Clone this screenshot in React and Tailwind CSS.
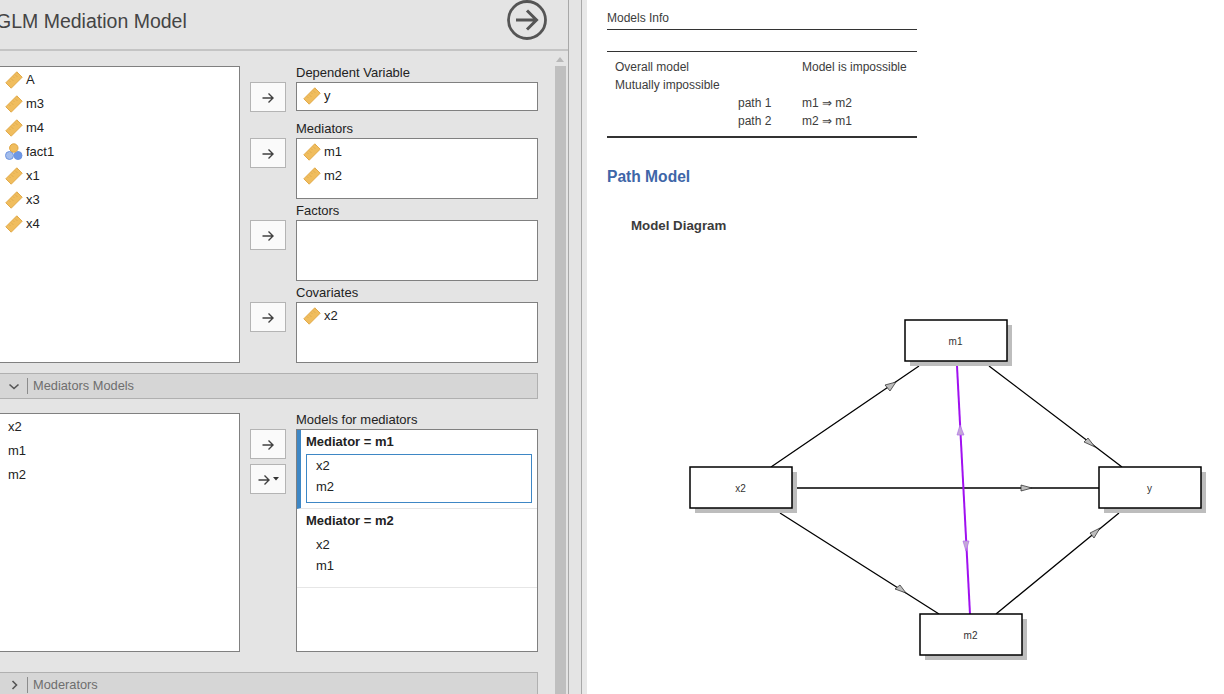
const Ruler = () => (
    <svg width="18" height="18" viewBox="0 0 18 18" className="shrink-0">
        <path d="M0.8 11.8 11.8 0.8 17.2 6.2 6.2 17.2Z" fill="#f0bd5e" stroke="#e2aa4a" strokeWidth="1" />
        <path d="M4 9.5l1.5 1.5M6 7.5l2.5 2.5M8 5.5l1.5 1.5M10 3.5l2.5 2.5M12 1.5l1.5 1.5" stroke="#dba94f" strokeWidth="0.8" fill="none" />
    </svg>
);

const Nominal = () => (
    <svg width="18" height="18" viewBox="0 0 18 18" className="shrink-0">
        <circle cx="4.5" cy="12.5" r="4" fill="#a3bdec" stroke="#6f94df" strokeWidth="1" />
        <circle cx="13" cy="12.5" r="4" fill="#6d97e6" stroke="#6f94df" strokeWidth="1" />
        <circle cx="8.8" cy="5" r="4.2" fill="#f0bd5e" stroke="#dfa542" strokeWidth="1" />
    </svg>
);

const ArrowGlyph = () => (
    <svg width="14" height="12" viewBox="0 0 14 12" className="mt-[2px]">
        <path d="M1.5 6h10.5M7.5 1.5 12 6 7.5 10.5" fill="none" stroke="#404040" strokeWidth="1.4" />
    </svg>
);

const AssignButton = ({ menu = false, className = "" }) => (
    <div className={`w-9 h-[30px] shrink-0 flex items-center justify-center bg-[#fafafa] border border-[#b4b4b4] ${className}`}>
        <ArrowGlyph />
        {menu && (
            <svg width="6" height="4" viewBox="0 0 6 4" className="ml-[2px]">
                <path d="M0 0h6L3 3.5Z" fill="#333" />
            </svg>
        )}
    </div>
);

const VarRow = ({ name, icon = <Ruler />, className = "" }) => (
    <div className={`h-6 flex items-center gap-[3px] ${className}`}>
        {icon}
        <span>{name}</span>
    </div>
);

const Target = ({ label, height, children, className = "" }) => (
    <div className={`flex ${className}`}>
        <AssignButton className="mt-4 ml-[10px]" />
        <div className="ml-[10px] w-[242px]">
            <div className="h-4 leading-[13px] text-[13px] text-[#222]">{label}</div>
            <div className={`bg-white border border-[#808080] pl-[6px] pt-[1px] ${height}`}>{children}</div>
        </div>
    </div>
);

const Section = ({ open, title, className = "" }) => (
    <div className={`w-[538px] h-[26px] shrink-0 flex items-center bg-[#d6d6d6] border border-l-0 border-[#b0b0b0] ${className}`}>
        <svg width="12" height="12" viewBox="0 0 12 12" className="ml-2">
            <path d={open ? "M1.5 4.5 6 8.5l4.5-4" : "M4.5 2 8.5 6l-4 4"} fill="none" stroke="#555" strokeWidth="1.6" />
        </svg>
        <div className="w-px h-4 bg-[#8c8c8c] ml-[7px]" />
        <span className="ml-[5px] text-[12.8px] text-[#6e6e6e]">{title}</span>
    </div>
);

const Box = ({ x, y, label }) => (
    <g>
        <rect x={x + 5} y={y + 5} width="102" height="41" fill="#bdbdbd" />
        <rect x={x} y={y} width="102" height="41" fill="#fff" stroke="#000" strokeWidth="1.5" />
        <text x={x + 50.5} y={y + 25} textAnchor="middle" fontSize="10" fontFamily="Liberation Sans" fill="#333">{label}</text>
    </g>
);

const Head = ({ points, purple = false }) => (
    <polygon
        points={points}
        fill={purple ? "#c4a8d8" : "#bdbdbd"}
        stroke={purple ? "#b070e8" : "#222"}
        strokeWidth="0.7"
    />
);

const Diagram = () => (
    <svg width="560" height="370" viewBox="680 310 560 370" className="block mt-[76px] ml-[73px]">
        <path d="M771 467 919 366M989 366 1122 467M797 488H1099M780 513 939 614M996 614 1119 513" stroke="#000" strokeWidth="1.3" fill="none" />
        <path d="M957 366 970 614" stroke="#a010f0" strokeWidth="2" fill="none" />
        <Head points="896,382 885,385 890,391" />
        <Head points="1095,447 1084,442 1088,438" />
        <Head points="1032,488 1021,485 1021,491" />
        <Head points="906,593 895,589 900,585" />
        <Head points="1100,528 1090,533 1094,538" />
        <Head purple points="960,425 957,435 964,435" />
        <Head purple points="966,551 963,541 969,541" />
        <Box x={905} y={320} label="m1" />
        <Box x={690} y={467} label="x2" />
        <Box x={1099} y={467} label="y" />
        <Box x={920} y={614} label="m2" />
    </svg>
);

const infoRows = [
    ["Overall model", "", "Model is impossible"],
    ["Mutually impossible", "", ""],
    ["", "path 1", "m1 ⇒ m2"],
    ["", "path 2", "m2 ⇒ m1"],
];

export default function App() {
    return (
        <div className="w-[1224px] h-[694px] flex overflow-hidden bg-white font-['Liberation_Sans',sans-serif]">
            <div className="w-[569px] h-full shrink-0 flex flex-col bg-[#e4e4e4] border-r border-[#a8a8a8]">
                <div className="h-[51px] shrink-0 flex items-start justify-between border-b-2 border-[#c4c4c4]">
                    <h1 className="mt-[7px] ml-[-4px] text-[19.5px] leading-7 whitespace-nowrap text-[#444]">GLM Mediation Model</h1>
                    <svg width="42" height="42" viewBox="0 0 42 42" className="mr-[20px] mt-[-1px]">
                        <circle cx="21" cy="21" r="18.5" fill="none" stroke="#555" strokeWidth="2.8" />
                        <path d="M10 21h20M21 11.5 30.5 21 21 30.5" fill="none" stroke="#555" strokeWidth="3" />
                    </svg>
                </div>
                <div className="flex flex-1 min-h-0">
                    <div className="w-[552px] shrink-0 overflow-hidden pt-[15px] text-[13px] text-[#222]">
                        <div className="flex">
                            <div className="w-[240px] h-[297px] shrink-0 bg-white border border-l-0 border-[#808080] pl-[5px] pt-[1px]">
                                <VarRow name="A" />
                                <VarRow name="m3" />
                                <VarRow name="m4" />
                                <VarRow name="fact1" icon={<Nominal />} />
                                <VarRow name="x1" />
                                <VarRow name="x3" />
                                <VarRow name="x4" />
                            </div>
                            <div className="flex flex-col">
                                <Target label="Dependent Variable" height="h-[29px]">
                                    <VarRow name="y" />
                                </Target>
                                <Target label="Mediators" height="h-[61px]" className="mt-[10px]">
                                    <VarRow name="m1" />
                                    <VarRow name="m2" />
                                </Target>
                                <Target label="Factors" height="h-[61px]" className="mt-[5px]" />
                                <Target label="Covariates" height="h-[61px]" className="mt-[5px]">
                                    <VarRow name="x2" />
                                </Target>
                            </div>
                        </div>
                        <Section open title="Mediators Models" className="mt-[10px]" />
                        <div className="flex mt-[14px]">
                            <div className="w-[240px] h-[239px] shrink-0 bg-white border border-l-0 border-[#808080] pl-2 pt-[1px]">
                                <div className="h-6 flex items-center">x2</div>
                                <div className="h-6 flex items-center">m1</div>
                                <div className="h-6 flex items-center">m2</div>
                            </div>
                            <div className="flex flex-col gap-[5px] mt-4 ml-[10px]">
                                <AssignButton />
                                <AssignButton menu />
                            </div>
                            <div className="ml-[10px] w-[242px] -mt-[1px]">
                                <div className="h-[17px] leading-[15px] text-[#222]">Models for mediators</div>
                                <div className="h-[223px] bg-white border border-[#808080]">
                                    <div className="h-[79px] border-l-4 border-b border-l-[#3e87c5] border-b-[#e6e6e6] pl-[5px] pr-[5px]">
                                        <div className="h-6 flex items-center font-bold">Mediator = m1</div>
                                        <div className="h-[49px] border border-[#3e87c5] pl-[9px]">
                                            <div className="h-[21px] flex items-center">x2</div>
                                            <div className="h-[21px] flex items-center">m2</div>
                                        </div>
                                    </div>
                                    <div className="h-[79px] border-b border-[#e6e6e6] pl-[9px] pr-[5px]">
                                        <div className="h-6 flex items-center font-bold">Mediator = m2</div>
                                        <div className="h-[49px] pl-[10px] pt-[1px]">
                                            <div className="h-[21px] flex items-center">x2</div>
                                            <div className="h-[21px] flex items-center">m1</div>
                                        </div>
                                    </div>
                                </div>
                            </div>
                        </div>
                        <Section title="Moderators" className="mt-[20px]" />
                    </div>
                    <div className="w-[13px] shrink-0 flex flex-col ml-[3px]">
                        <svg width="8" height="5" viewBox="0 0 8 5" className="ml-[1px] mt-[6px] mb-[4px]">
                            <path d="M0 5 4 0l4 5Z" fill="#b8b8b8" />
                        </svg>
                        <div className="w-[11px] flex-1 bg-[#bfbfbf]" />
                    </div>
                </div>
            </div>
            <div className="w-[13px] shrink-0 bg-[#e4e4e4] border-r border-[#a8a8a8]" />
            <div className="w-[5px] shrink-0 bg-[#e8e8e8]" />
            <div className="flex-1 min-w-0 pl-5 pt-[11px] text-[12px] text-[#3c3c3c]">
                <div className="w-[310px]">
                    <div className="h-[19px] leading-[14px] border-b border-[#333]">Models Info</div>
                    <div className="h-[22px] border-b border-[#333]" />
                    <div className="grid grid-cols-[123px_64px_1fr] pl-2 pt-[6px] pb-[6px] border-b-2 border-[#333]">
                        {infoRows.map((row) =>
                            row.map((cell, i) => (
                                <div key={row[0] + row[1] + i} className="h-[18px] leading-[18px] whitespace-nowrap">{cell}</div>
                            )),
                        )}
                    </div>
                </div>
                <h2 className="mt-[29px] text-[15.6px] leading-[20px] font-bold text-[#3e66a8]">Path Model</h2>
                <h3 className="mt-[31px] ml-6 text-[13.3px] leading-[16px] font-bold text-[#3c3c3c]">Model Diagram</h3>
                <Diagram />
            </div>
        </div>
    );
}
